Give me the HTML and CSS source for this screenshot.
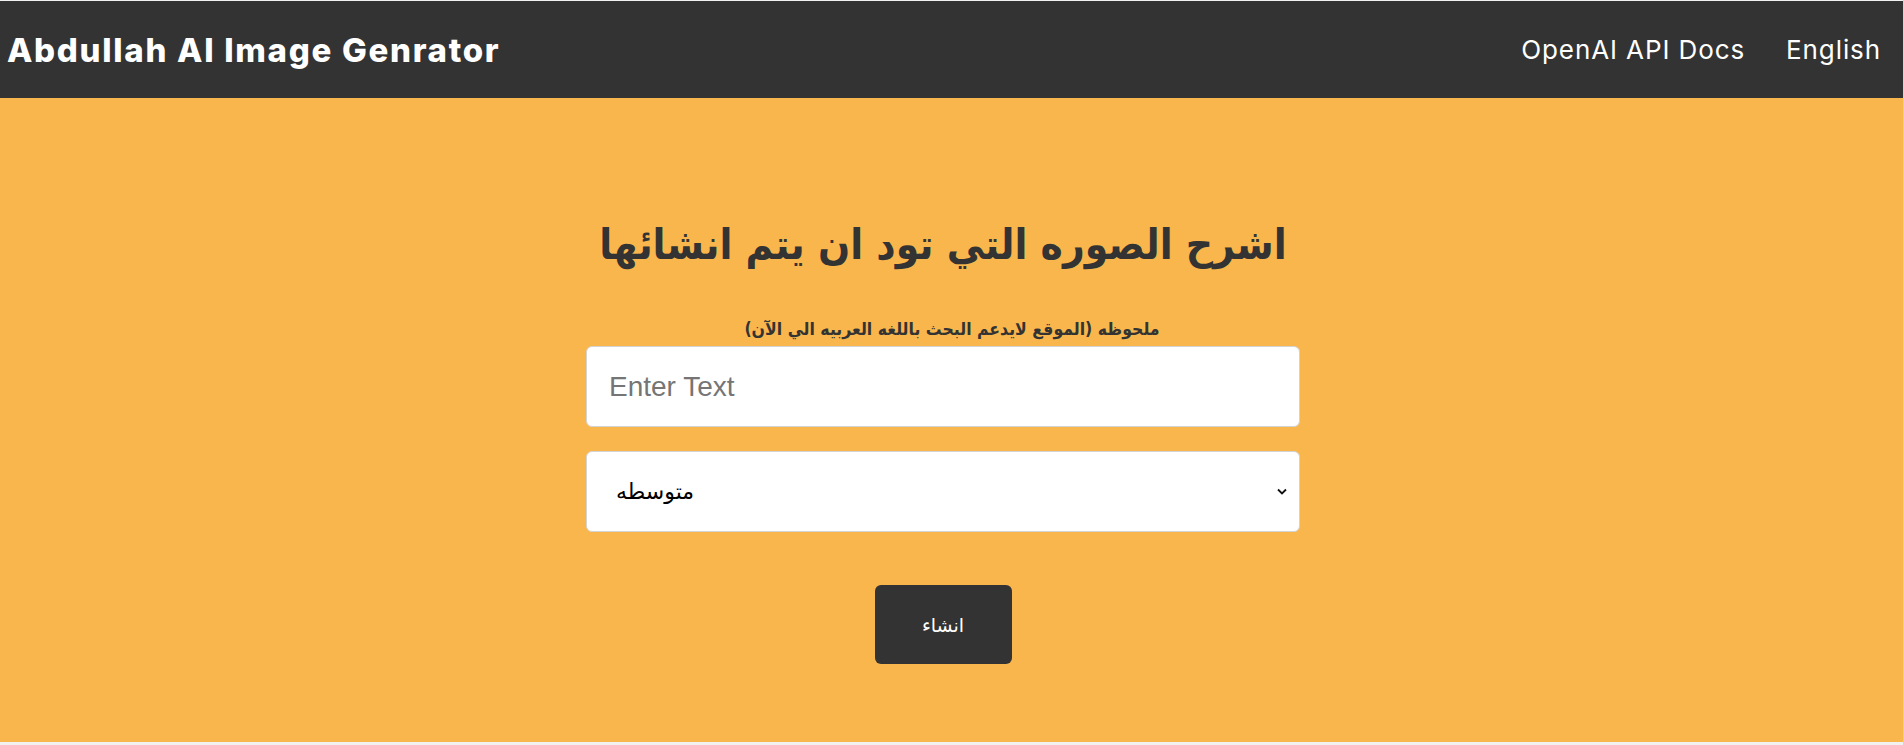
FILE: index.html
```html
<!DOCTYPE html>
<html lang="ar">
<head>
<meta charset="utf-8">
<title>Abdullah AI Image Genrator</title>
<link rel="stylesheet" href="styles.css">
</head>
<body>
<div class="page">
  <nav class="navbar">
    <a class="brand" href="#">Abdullah AI Image Genrator</a>
    <ul class="nav-links">
      <li><a href="#">OpenAI API Docs</a></li>
      <li><a href="#">English</a></li>
    </ul>
  </nav>
  <main class="showcase">
    <form class="form">
      <h1 class="title" dir="rtl">اشرح الصوره التي تود ان يتم انشائها</h1>
      <p class="note" dir="rtl">ملحوظه (الموقع لايدعم البحث باللغه العربيه الي الآن)</p>
      <input class="field" type="text" placeholder="Enter Text">
      <div class="select-wrap">
        <select class="field select">
          <option>متوسطه</option>
        </select>
        <span class="caret"><svg width="10" height="7" viewBox="0 0 10 7"><path d="M1 1.5 L5 5.5 L9 1.5" fill="none" stroke="#111" stroke-width="1.8"/></svg></span>
      </div>
      <button class="btn" type="button">انشاء</button>
    </form>
  </main>
</div>
</body>
</html>
```
FILE: styles.css
```css
html, body {
  margin: 0;
  padding: 0;
}
body {
  background: #f1f1f1;
  font-family: "Liberation Sans", "DejaVu Sans", sans-serif;
}
.page {
  padding-top: 1px;
}
.navbar {
  height: 97px;
  background: #333333;
  display: flex;
  align-items: center;
  justify-content: space-between;
  padding: 0 22px 0 7px;
  box-sizing: border-box;
}
.brand {
  font-family: Inter, "Open Sans", sans-serif;
  font-weight: 800;
  font-size: 33px;
  letter-spacing: 1.7px;
  color: #ffffff;
  text-decoration: none;
}
.nav-links {
  list-style: none;
  display: flex;
  gap: 41px;
  margin: 0;
  padding: 0;
}
.nav-links a {
  font-family: Inter, "Open Sans", sans-serif;
  font-size: 26px;
  font-weight: 400;
  letter-spacing: 0.9px;
  color: #ffffff;
  text-decoration: none;
}
.showcase {
  background: #f9b64d;
  height: 644px;
  display: flex;
  justify-content: center;
  padding-right: 17px;
}
.form {
  width: 714px;
  display: flex;
  flex-direction: column;
  align-items: center;
  padding-top: 123px;
}
.title {
  margin: 0;
  white-space: nowrap;
  font-family: "DejaVu Sans Condensed", "DejaVu Sans", sans-serif;
  font-stretch: condensed;
  font-size: 42px;
  font-weight: 700;
  color: #333333;
  line-height: 48px;
}
.note {
  margin: 50px 0 7px;
  padding-left: 18px;
  white-space: nowrap;
  font-family: "DejaVu Sans Condensed", "DejaVu Sans", sans-serif;
  font-stretch: condensed;
  font-size: 17.5px;
  line-height: 20px;
  font-weight: 700;
  color: #333333;
}
.field {
  width: 714px;
  height: 81px;
  box-sizing: border-box;
  border: 1px solid #d3d3d3;
  border-radius: 6px;
  background: #ffffff;
  padding: 0 22px;
  font-family: "Liberation Sans", sans-serif;
  font-size: 28px;
  color: #333;
  outline: none;
}
.field::placeholder {
  color: #757575;
}
.select-wrap {
  position: relative;
  margin-top: 24px;
}
.select {
  appearance: none;
  -webkit-appearance: none;
  padding: 0 29px;
  font-family: "DejaVu Sans", sans-serif;
  font-size: 22px;
  color: #000;
}
.caret {
  position: absolute;
  right: 13px;
  top: 37px;
  pointer-events: none;
  display: flex;
}
.btn {
  margin-top: 53px;
  width: 137px;
  height: 79px;
  border: none;
  border-radius: 6px;
  background: #333333;
  color: #ffffff;
  font-family: "DejaVu Sans", sans-serif;
  font-size: 19px;
}
```
